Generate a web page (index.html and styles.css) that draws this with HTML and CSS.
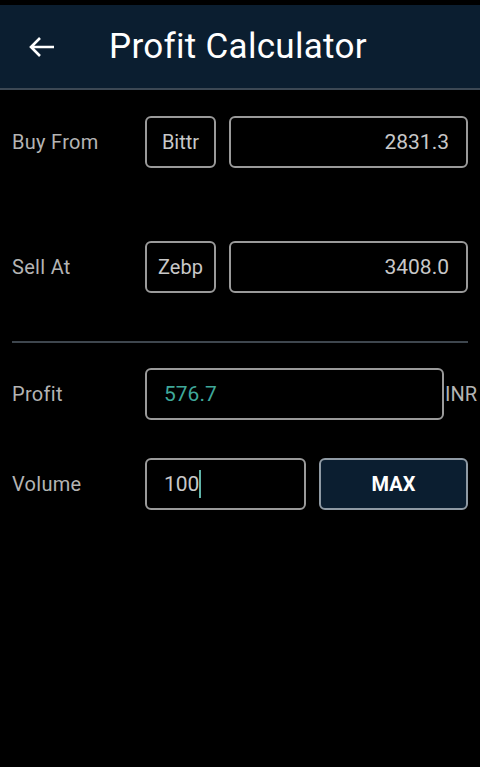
FILE: index.html
```html
<!DOCTYPE html>
<html lang="en">

<head>
    <meta charset="UTF-8">
    <meta name="viewport" content="width=device-width, initial-scale=1.0">
    <title>Profit Calculator</title>
    <link rel="stylesheet" href="styles.css">
</head>

<body>
    <div class="status"></div>
    <header class="toolbar">
        <svg class="back" width="26" height="22" viewBox="0 0 26 22">
            <path d="M25 11H2M11 2L2 11L11 20" fill="none" stroke="#fff" stroke-width="2.6" />
        </svg>
        <h1>Profit Calculator</h1>
    </header>

    <main class="content">
        <div class="row">
            <span class="label">Buy From</span>
            <div class="box exchange">Bittr</div>
            <div class="box price">2831.3</div>
        </div>
        <div class="row sell">
            <span class="label">Sell At</span>
            <div class="box exchange">Zebp</div>
            <div class="box price">3408.0</div>
        </div>

        <hr class="divider">

        <div class="row profit">
            <span class="label">Profit</span>
            <div class="box result">576.7</div>
            <span class="unit">INR</span>
        </div>
        <div class="row volume">
            <span class="label">Volume</span>
            <div class="box amount">100<span class="caret"></span></div>
            <button class="max">MAX</button>
        </div>
    </main>
</body>

</html>
```

FILE: styles.css
```css
body {
    margin: 0;
    background-color: #000;
    font-family: Roboto, "Liberation Sans", sans-serif;
    color: #b4b4b4;
    overflow: hidden;
}

.status {
    height: 5px;
    background-color: #000;
}

.toolbar {
    height: 83px;
    display: flex;
    align-items: center;
    background-color: #0b1e30;
    border-bottom: 2px solid #3c4854;
}

.back {
    margin-left: 29px;
    margin-right: 54px;
}

.toolbar h1 {
    margin: 0;
    font-size: 35px;
    font-weight: 400;
    letter-spacing: 0.3px;
    color: #fff;
}

.content {
    padding: 0 12px;
}

.row {
    display: flex;
    align-items: center;
    height: 52px;
}

.row > * {
    flex-shrink: 0;
}

.row:first-child {
    margin-top: 26px;
}

.sell {
    margin-top: 73px;
}

.label {
    width: 133px;
    font-size: 20px;
    letter-spacing: 0.3px;
}

.box {
    box-sizing: border-box;
    height: 52px;
    border: 2px solid #9a9a9a;
    border-radius: 6px;
    display: flex;
    align-items: center;
    font-size: 20px;
    color: #c8c8c8;
}

.exchange {
    width: 71px;
    justify-content: center;
}

.price {
    width: 239px;
    margin-left: 13px;
    justify-content: flex-end;
    padding-right: 17px;
    font-size: 21px;
}

.divider {
    margin: 48px 0 0;
    border: none;
    border-top: 2px solid #3e464e;
}

.profit {
    margin-top: 25px;
}

.result {
    width: 299px;
    padding-left: 17px;
    color: #3fa89a;
    font-size: 21px;
}

.unit {
    margin-left: 1px;
    font-size: 20px;
}

.volume {
    margin-top: 38px;
}

.amount {
    width: 161px;
    padding-left: 17px;
    font-size: 21px;
}

.caret {
    width: 2px;
    height: 28px;
    background-color: #5fb3a8;
}

.max {
    box-sizing: border-box;
    width: 149px;
    height: 52px;
    margin-left: 13px;
    border: 2px solid #8f9aa4;
    border-radius: 6px;
    background-color: #0b1e30;
    color: #fff;
    font-family: Roboto, "Liberation Sans", sans-serif;
    font-size: 20px;
    font-weight: 700;
}
```
